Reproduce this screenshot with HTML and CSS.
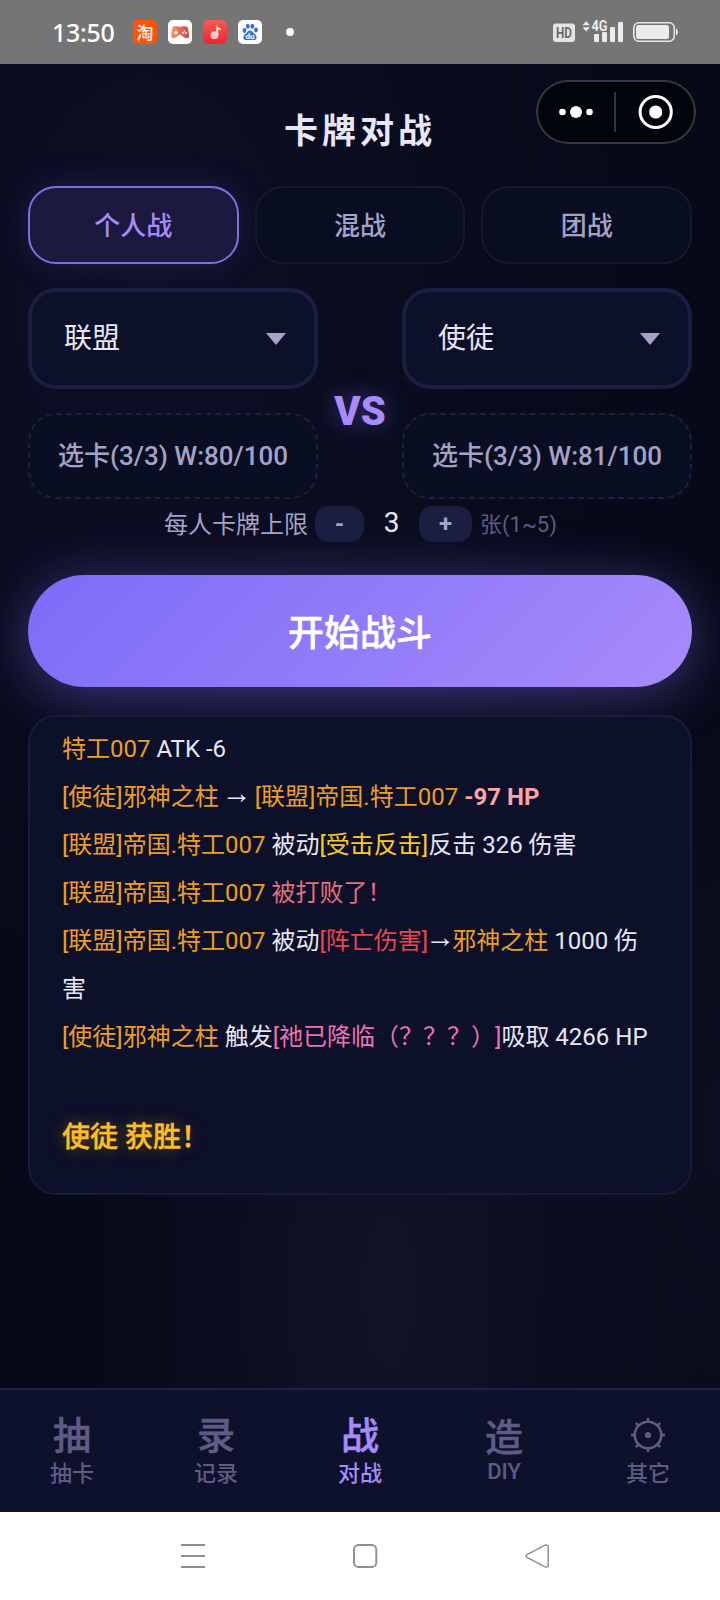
FILE: index.html
```html
<!DOCTYPE html>
<html lang="zh-CN">
<head>
<meta charset="utf-8">
<title>卡牌对战</title>
<link rel="stylesheet" href="styles.css">
</head>
<body>
<div class="phone">
  <header class="status">
    <span class="clock">13:50</span>
    <span class="app app-tao">淘</span>
    <svg class="app" viewBox="0 0 24 24"><defs><linearGradient id="pad" x2="1"><stop stop-color="#f49a62"/><stop offset=".5" stop-color="#e8694f"/><stop offset="1" stop-color="#cf4a4a"/></linearGradient></defs><rect width="24" height="24" rx="5" fill="#fff"/><path d="M5.500 6.300L10 6.300Q12 7.800 14 6.300L18.500 6.300L20 8Q21.800 17 20.500 18L17.500 18.300L12 14.500L6.500 18.300L3.500 18Q2.600 15 4.500 8Z" fill="url(#pad)"/><path d="M6 12.500h4M8 10.500v4" stroke="#fff" stroke-width="1.300"/><circle cx="15" cy="12.700" r="1" fill="#fff"/><circle cx="17.800" cy="12.700" r="1" fill="#fff"/><circle cx="16.400" cy="11" r=".8" fill="#fff"/></svg>
    <svg class="app" viewBox="0 0 24 24"><defs><linearGradient id="mus" x2="0" y2="1"><stop stop-color="#fb5a50"/><stop offset="1" stop-color="#ee2433"/></linearGradient></defs><rect width="24" height="24" rx="6" fill="url(#mus)"/><circle cx="11.500" cy="15.200" r="3.900" fill="#fbc9c5"/><path d="M13.200 5Q14.500 8 17.800 8.700V10.300Q16 10 15.300 9.300V15H13.200Z" fill="#fde4e1"/></svg>
    <svg class="app" viewBox="0 0 24 24"><rect width="24" height="24" rx="5" fill="#fff"/><g fill="#3b6fd4"><ellipse cx="6.500" cy="10.500" rx="1.900" ry="2.400"/><ellipse cx="9.800" cy="6.300" rx="1.900" ry="2.500"/><ellipse cx="14.300" cy="6.300" rx="1.900" ry="2.500"/><ellipse cx="18" cy="10" rx="1.900" ry="2.400"/><path d="M12 10.500C14 10.500 15 12.500 17 14.200C20 17 18.500 20.500 15.500 20H8.500C5.500 20.500 4 17 7 14.200C9 12.500 10 10.500 12 10.500Z"/></g><text x="12" y="18.500" text-anchor="middle" class="du">du</text></svg>
    <span class="more-dot"></span>
    <svg class="signals" viewBox="0 0 126 24" width="126" height="24">
      <rect x="0" y="3.500" width="22" height="18.500" rx="3" fill="#e4e4e4"/>
      <text x="3" y="18" textLength="16" lengthAdjust="spacingAndGlyphs" class="hd">HD</text>
      <path d="M29.500 5.300L33.200 1L36.900 5.300ZM29.500 7.200L33.200 11.500L36.900 7.200Z" fill="#ececec"/>
      <text x="38.500" y="11" textLength="16" lengthAdjust="spacingAndGlyphs" class="g4">4G</text>
      <g fill="#ececec"><rect x="41" y="14" width="5" height="8" rx="1"/><rect x="49" y="12" width="5" height="10" rx="1"/><rect x="57" y="7" width="5" height="15" rx="1"/><rect x="65" y="2" width="5" height="20" rx="1"/></g>
      <rect x="80.800" y="2.800" width="40.500" height="18.400" rx="5" fill="none" stroke="#e8e8e8" stroke-width="1.600"/><rect x="83" y="5" width="33" height="14" rx="2.500" fill="#ececec"/><path d="M123 8.500Q125 9 125 12T123 15.500Z" fill="#e8e8e8"/>
    </svg>
  </header>

  <div class="capsule">
    <svg viewBox="0 0 160 64" width="160" height="64"><g fill="#fff"><circle cx="26.500" cy="32" r="3.300"/><circle cx="40" cy="32" r="6"/><circle cx="53.500" cy="32" r="3.300"/><circle cx="119.700" cy="32" r="6.600"/></g><path d="M79 12v40" stroke="#38393f" stroke-width="2"/><circle cx="119.700" cy="32" r="15.600" fill="none" stroke="#fff" stroke-width="3"/></svg>
  </div>

  <main class="page">
    <h1 class="title">卡牌对战</h1>
    <nav class="modes">
      <button class="mode mode-on">个人战</button>
      <button class="mode">混战</button>
      <button class="mode">团战</button>
    </nav>
    <section class="versus">
      <div class="side">
        <div class="select"><span>联盟</span><i class="caret"></i></div>
        <div class="pick">选卡(3/3) W:80/100</div>
      </div>
      <div class="vs">VS</div>
      <div class="side">
        <div class="select"><span>使徒</span><i class="caret"></i></div>
        <div class="pick">选卡(3/3) W:81/100</div>
      </div>
    </section>
    <div class="limit">
      <span class="limit-label">每人卡牌上限</span>
      <button class="step minus">-</button>
      <span class="count">3</span>
      <button class="step plus">+</button>
      <span class="hint">张(1~5)</span>
    </div>
    <button class="start">开始战斗</button>
    <section class="log">
      <p><b class="unit">特工007</b> ATK -6</p>
      <p><b class="unit">[使徒]邪神之柱</b> <span class="arrow">→</span> <b class="unit">[联盟]帝国.特工007</b> <b class="damage">-97 HP</b></p>
      <p><b class="unit">[联盟]帝国.特工007</b> 被动<b class="counter">[受击反击]</b>反击 326 伤害</p>
      <p><b class="unit">[联盟]帝国.特工007</b> <b class="defeat">被打败了！</b></p>
      <p><b class="unit">[联盟]帝国.特工007</b> 被动<b class="death">[阵亡伤害]</b><span class="arrow">→</span><b class="unit">邪神之柱</b> 1000 伤害</p>
      <p><b class="unit">[使徒]邪神之柱</b> 触发<b class="skill">[祂已降临（？？？）]</b>吸取 4266 HP</p>
      <p class="winner">使徒 获胜！</p>
    </section>
  </main>

  <nav class="tabs">
    <a class="tab"><span class="glyph">抽</span><span class="name">抽卡</span></a>
    <a class="tab"><span class="glyph">录</span><span class="name">记录</span></a>
    <a class="tab tab-on"><span class="glyph">战</span><span class="name">对战</span></a>
    <a class="tab tab-diy"><span class="glyph">造</span><span class="name">DIY</span></a>
    <a class="tab"><span class="glyph"><svg viewBox="-18 -18 36 36" width="36" height="36" fill="none" stroke="currentColor" stroke-width="2.600"><circle r="13.300"/><path d="M0-13V-17M0 13V17M-13 0H-17M13 0H17M9.400-9.400L12.200-12.200M-9.400-9.400L-12.200-12.200M9.400 9.400L12.200 12.200M-9.400 9.400L-12.200 12.200"/><circle r="3.100" fill="currentColor" stroke="none"/></svg></span><span class="name">其它</span></a>
  </nav>

  <footer class="keys">
    <svg viewBox="0 0 720 88" width="720" height="88" fill="none" stroke="#8f8f8f" stroke-width="1.900"><path d="M181 33H205M181 44H205M181 55H205"/><rect x="354" y="33" width="22.300" height="22" rx="4.500"/><path d="M527 42.600L544.500 33.400Q548.200 32 548.200 35V53Q548.200 56 544.500 54.600L527 45.400Q525 44 527 42.600Z" stroke-width="1.500"/></svg>
  </footer>
</div>
</body>
</html>
```

FILE: styles.css
```css
* { box-sizing: border-box; }
body { margin: 0; background: #070a18; }
button { font: inherit; color: inherit; border: 0; padding: 0; background: none; }
b { font-weight: inherit; }

.phone {
  position: relative;
  width: 720px;
  height: 1600px;
  display: flex;
  flex-direction: column;
  overflow: hidden;
  color: #e8e6f8;
  font-family: Roboto, "Noto Sans CJK SC", sans-serif;
  text-spacing-trim: space-all;
  background:
    radial-gradient(ellipse 310px 900px at 390px 1290px, #121329 0%, rgba(18, 19, 41, 0) 100%),
    radial-gradient(ellipse 200px 500px at 720px 1130px, #0c0f1f 0%, rgba(12, 15, 31, 0) 100%),
    radial-gradient(ellipse 520px 760px at 150px 280px, #0e0f26 0%, rgba(14, 15, 38, 0) 100%),
    #060917;
}

.status {
  flex: none;
  height: 64px;
  display: flex;
  align-items: center;
  background: #757575;
  color: #fff;
  padding-left: 52px;
}
.clock { width: 81px; font: 500 25px/64px "Noto Sans", sans-serif; letter-spacing: -.3px; white-space: nowrap; }
.app { flex: none; width: 24px; height: 24px; margin-right: 11px; }
.app-tao { border-radius: 5px; background: #fc5304; font: 500 17px/23px "Noto Sans CJK SC", sans-serif; text-align: center; }
.du { font: 700 8px Roboto, sans-serif; fill: #fff; }
.more-dot { width: 8px; height: 8px; margin-left: 13px; border-radius: 50%; background: #fff; }
.signals { margin-left: 259px; overflow: visible; }
.hd { font: 700 15px Roboto, sans-serif; fill: #6c6c6c; }
.g4 { font: 700 14px Roboto, sans-serif; fill: #ececec; }

.capsule {
  position: absolute;
  top: 80px;
  left: 536px;
  width: 160px;
  height: 64px;
  border-radius: 32px;
  background: #02040c;
  box-shadow: inset 0 0 0 2px #38393f;
}
.capsule svg { display: block; }

.page { flex: 1; min-height: 0; padding: 0 28px; }
.title {
  margin: 0;
  height: 122px;
  padding-top: 42px;
  font-size: 34px;
  line-height: 50px;
  font-weight: 700;
  letter-spacing: 4px;
  text-align: center;
}

.modes { display: grid; grid-template-columns: repeat(3, 1fr); gap: 16px; }
.mode {
  height: 78px;
  padding-bottom: 4px;
  border: 2px solid #15182f;
  border-radius: 28px;
  background: #090d20;
  color: #a5a2c8;
  font-size: 26px;
  font-weight: 500;
}
.mode-on {
  border-color: #806fe0;
  background: #1b193d;
  color: #a78bfa;
  box-shadow: 0 0 32px rgba(124, 108, 248, .16);
}

.versus { display: flex; margin-top: 24px; }
.side { width: 290px; }
.select {
  height: 101px;
  display: flex;
  align-items: center;
  justify-content: space-between;
  padding: 0 28px 0 32px;
  border: 4px solid #1a1e40;
  border-radius: 28px;
  background: #0c1028;
  font-size: 28px;
}
.select span { padding-bottom: 5px; }
.caret { border: solid transparent; border-width: 12px 10px 0; border-top-color: #a5a2c8; }
.pick {
  height: 86px;
  margin-top: 24px;
  border: 2px dashed #1b203c;
  border-radius: 28px;
  background: #0a0e22;
  color: #a5a2c8;
  font-size: 26px;
  line-height: 82px;
  font-weight: 500;
  text-align: center;
  white-space: nowrap;
}
.vs {
  width: 84px;
  padding-top: 100px;
  font-size: 40px;
  line-height: 48px;
  font-weight: 900;
  text-align: center;
  color: #a78bfa;
  text-shadow: 0 0 24px rgba(124, 108, 248, .5);
}

.limit { display: flex; align-items: center; height: 36px; margin-top: 7px; padding-left: 135px; color: #a5a2c8; white-space: nowrap; }
.limit-label { width: 152px; padding: 0 0 4px 1px; font-size: 24px; }
.step { height: 36px; border-radius: 14px; background: #1a1e40; font-size: 24px; font-weight: 700; line-height: 36px; }
.minus { width: 49px; }
.plus { width: 53px; }
.count { width: 55px; padding-bottom: 2px; text-align: center; font-size: 28px; line-height: 36px; color: #e8e6f8; }
.hint { margin-left: 8px; padding-bottom: 4px; font-size: 22px; color: #5e5b85; }

.start {
  display: block;
  width: 100%;
  height: 112px;
  margin-top: 33px;
  padding-bottom: 3px;
  border-radius: 56px;
  background: linear-gradient(135deg, #7c6cf8, #a78bfa);
  box-shadow: 0 8px 56px rgba(124, 108, 248, .45);
  color: #fff;
  font-size: 36px;
  font-weight: 500;
  -webkit-text-stroke: .5px;
}

.log {
  height: 480px;
  margin-top: 28px;
  padding: 8px 32px;
  border: 2px solid #191c38;
  border-radius: 28px;
  background: #0c1028;
  font-size: 24px;
  line-height: 48px;
}
.log p { margin: 0; }
.arrow {
  display: inline-block;
  margin: 0 -3px;
  font: 30px/30px "Liberation Sans", Arial, sans-serif;
  vertical-align: 2px;
}
.unit { color: #ee9f22; }
.damage { color: #fca5a5; font-weight: 700; }
.counter { color: #fbcb24; }
.defeat { color: #e66f7c; }
.death { color: #e84550; }
.skill { color: #ec72b4; }
.log .winner {
  margin-top: 49px;
  font-size: 28px;
  line-height: 56px;
  font-weight: 500;
  -webkit-text-stroke: .4px;
  color: #fbbf24;
  text-shadow: 0 0 16px rgba(251, 191, 36, .4);
}

.tabs {
  flex: none;
  height: 124px;
  display: grid;
  grid-template-columns: repeat(5, 1fr);
  border-top: 2px solid #1d2144;
  background: #0d112b;
  color: #5e5b85;
}
.tab { display: flex; flex-direction: column; align-items: center; padding-top: 26px; }
.glyph { height: 40px; font-size: 38px; line-height: 40px; font-weight: 500; -webkit-text-stroke: .5px; }
.glyph svg { display: block; margin-top: 1px; }
.name { margin-top: 1px; font-size: 22px; line-height: 34px; font-weight: 500; }
.tab-on { color: #a78bfa; }
.tab-diy { padding-top: 28px; }
.tab-diy .name { margin-top: -3px; }

.keys { flex: none; height: 88px; background: #fff; }
.keys svg { display: block; }
```
